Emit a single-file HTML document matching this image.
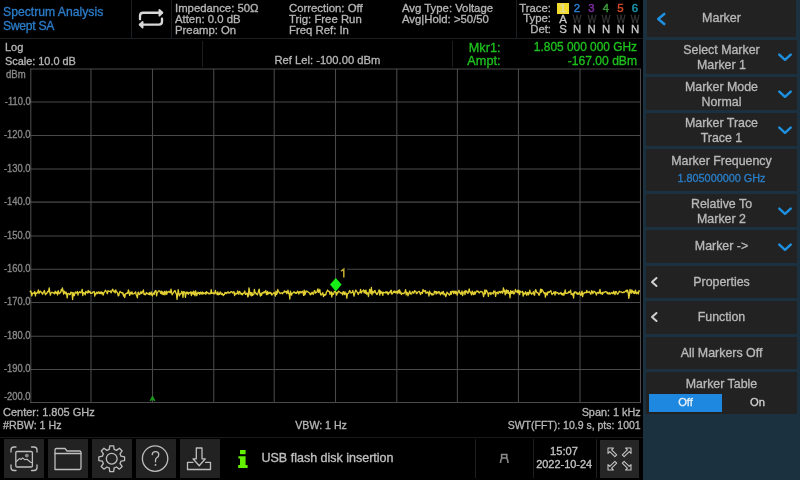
<!DOCTYPE html>
<html><head><meta charset="utf-8"><style>
html,body{margin:0;padding:0;}
body{width:800px;height:480px;background:#000;position:relative;overflow:hidden;filter:blur(0.4px);font-family:"Liberation Sans",sans-serif;}
.t{position:absolute;line-height:1;white-space:nowrap;-webkit-text-stroke:0.32px currentColor;}
.r{position:absolute;}
</style></head><body>
<div class="t" style="left:3px;top:6.17px;font-size:12.2px;color:#2a7cc8;">Spectrum Analysis</div>
<div class="t" style="left:3px;top:20.27px;font-size:12.2px;color:#2a7cc8;letter-spacing:-0.3px;">Swept SA</div>
<div class="r" style="left:0px;top:38px;width:643px;height:1px;background:#1c1f22;"></div>
<div class="r" style="left:131px;top:0px;width:1px;height:38px;background:#1c1f22;"></div>
<div class="r" style="left:171px;top:0px;width:1px;height:38px;background:#1c1f22;"></div>
<div class="r" style="left:516px;top:0px;width:1px;height:38px;background:#1c1f22;"></div>
<svg class="r" style="left:134px;top:4px" width="34" height="30" viewBox="0 0 34 30">
<g fill="none" stroke="#d8d8d8" stroke-width="2.3" stroke-linecap="round" stroke-linejoin="round">
<path d="M6 15.3 V12 Q6 8.75 9.2 8.75 H27.6"/><path d="M25.4 6 L28.4 8.75 L25.4 11.6 Z" fill="#d8d8d8" stroke-width="1.8"/>
<path d="M28 14.6 V17.4 Q28 20.6 24.8 20.6 H6.2"/><path d="M8.6 17.9 L5.6 20.6 L8.6 23.6 Z" fill="#d8d8d8" stroke-width="1.8"/>
</g></svg>
<div class="t" style="left:175px;top:3.14px;font-size:11.35px;color:#b6b6b6;">Impedance: 50Ω</div>
<div class="t" style="left:175px;top:14.14px;font-size:11.35px;color:#b6b6b6;">Atten: 0.0 dB</div>
<div class="t" style="left:175px;top:25.14px;font-size:11.35px;color:#b6b6b6;">Preamp: On</div>
<div class="t" style="left:289px;top:3.14px;font-size:11.35px;color:#b6b6b6;">Correction: Off</div>
<div class="t" style="left:289px;top:14.14px;font-size:11.35px;color:#b6b6b6;">Trig: Free Run</div>
<div class="t" style="left:289px;top:25.14px;font-size:11.35px;color:#b6b6b6;">Freq Ref: In</div>
<div class="t" style="left:402px;top:3.14px;font-size:11.35px;color:#b6b6b6;">Avg Type: Voltage</div>
<div class="t" style="left:402px;top:14.14px;font-size:11.35px;color:#b6b6b6;">Avg|Hold: &gt;50/50</div>
<div class="t" style="right:249px;top:2.69px;font-size:11.35px;color:#b6b6b6;">Trace:</div>
<div class="t" style="right:249px;top:13.49px;font-size:11.35px;color:#b6b6b6;">Type:</div>
<div class="t" style="right:249px;top:24.29px;font-size:11.35px;color:#b6b6b6;">Det:</div>
<div class="r" style="left:557px;top:3px;width:12px;height:11px;background:#f2da2e;"></div>
<div class="t" style="left:553.0px;width:20px;text-align:center;top:2.95px;font-size:11.4px;color:#e4dc9c;-webkit-text-stroke:0.45px #e4dc9c;">1</div>
<div class="t" style="left:567.0px;width:20px;text-align:center;top:2.95px;font-size:11.4px;color:#2a7fd0;-webkit-text-stroke:0.45px #2a7fd0;">2</div>
<div class="t" style="left:581.5px;width:20px;text-align:center;top:2.95px;font-size:11.4px;color:#7e2aa0;-webkit-text-stroke:0.45px #7e2aa0;">3</div>
<div class="t" style="left:596.0px;width:20px;text-align:center;top:2.95px;font-size:11.4px;color:#3c9a3c;-webkit-text-stroke:0.45px #3c9a3c;">4</div>
<div class="t" style="left:610.5px;width:20px;text-align:center;top:2.95px;font-size:11.4px;color:#d24a26;-webkit-text-stroke:0.45px #d24a26;">5</div>
<div class="t" style="left:625.0px;width:20px;text-align:center;top:2.95px;font-size:11.4px;color:#1a98b0;-webkit-text-stroke:0.45px #1a98b0;">6</div>
<div class="t" style="left:553.0px;width:20px;text-align:center;top:13.55px;font-size:11.4px;color:#c8c8c8;">A</div>
<div class="t" style="left:567.0px;width:20px;text-align:center;top:13.55px;font-size:11.4px;color:#383838;transform:scaleX(0.8);">W</div>
<div class="t" style="left:581.5px;width:20px;text-align:center;top:13.55px;font-size:11.4px;color:#383838;transform:scaleX(0.8);">W</div>
<div class="t" style="left:596.0px;width:20px;text-align:center;top:13.55px;font-size:11.4px;color:#383838;transform:scaleX(0.8);">W</div>
<div class="t" style="left:610.5px;width:20px;text-align:center;top:13.55px;font-size:11.4px;color:#383838;transform:scaleX(0.8);">W</div>
<div class="t" style="left:625.0px;width:20px;text-align:center;top:13.55px;font-size:11.4px;color:#383838;transform:scaleX(0.8);">W</div>
<div class="t" style="left:553.0px;width:20px;text-align:center;top:24.35px;font-size:11.4px;color:#c8c8c8;">S</div>
<div class="t" style="left:567.0px;width:20px;text-align:center;top:24.35px;font-size:11.4px;color:#c8c8c8;">N</div>
<div class="t" style="left:581.5px;width:20px;text-align:center;top:24.35px;font-size:11.4px;color:#c8c8c8;">N</div>
<div class="t" style="left:596.0px;width:20px;text-align:center;top:24.35px;font-size:11.4px;color:#c8c8c8;">N</div>
<div class="t" style="left:610.5px;width:20px;text-align:center;top:24.35px;font-size:11.4px;color:#c8c8c8;">N</div>
<div class="t" style="left:625.0px;width:20px;text-align:center;top:24.35px;font-size:11.4px;color:#c8c8c8;">N</div>
<div class="t" style="left:5px;top:42.19px;font-size:11px;color:#b6b6b6;">Log</div>
<div class="t" style="left:5px;top:55.87px;font-size:10.9px;color:#b6b6b6;">Scale: 10.0 dB</div>
<div class="r" style="left:202px;top:41px;width:1px;height:26px;background:#1e1e1e;"></div>
<div class="r" style="left:452px;top:41px;width:1px;height:26px;background:#1e1e1e;"></div>
<div class="t" style="left:274.5px;top:55.02px;font-size:11.2px;color:#b6b6b6;">Ref Lel: -100.00 dBm</div>
<div class="t" style="right:299.5px;top:41.75px;font-size:12.7px;color:#1ec21e;">Mkr1:</div>
<div class="t" style="right:299.5px;top:54.85px;font-size:12.7px;color:#1ec21e;">Ampt:</div>
<div class="t" style="right:163px;top:42.23px;font-size:11.9px;color:#1ec21e;">1.805 000 000 GHz</div>
<div class="t" style="right:163px;top:55.26px;font-size:12.1px;color:#1ec21e;">-167.00 dBm</div>
<svg class="r" style="left:0;top:0" width="643" height="438" viewBox="0 0 643 438">
<path d="M30.80 69 V403 M91.00 69 V403 M152.50 69 V403 M213.75 69 V403 M274.20 69 V403 M335.50 69 V403 M396.80 69 V403 M457.40 69 V403 M518.45 69 V403 M580.00 69 V403 M640.50 69 V403 M30 68.90 H641 M30 101.90 H641 M30 135.50 H641 M30 169.00 H641 M30 202.10 H641 M30 236.00 H641 M30 269.30 H641 M30 302.45 H641 M30 336.20 H641 M30 369.50 H641 M30 402.50 H641" stroke="#4a4a4a" stroke-width="1.05" fill="none"/>
<polyline points="30.0,292.3 30.6,290.9 31.2,292.1 31.8,295.9 32.4,293.5 33.0,292.9 33.6,293.3 34.2,293.3 34.8,291.5 35.4,296.0 36.0,292.8 36.6,293.3 37.2,293.0 37.8,291.9 38.4,289.9 39.0,293.5 39.6,292.1 40.2,291.2 40.8,291.4 41.4,292.8 42.0,292.7 42.6,294.4 43.2,292.7 43.8,291.5 44.4,290.5 45.0,293.5 45.6,294.7 46.2,293.3 46.8,293.5 47.4,291.9 48.0,291.2 48.6,291.7 49.2,287.9 49.8,292.4 50.4,295.1 51.0,292.8 51.6,292.4 52.2,292.3 52.8,292.9 53.4,293.0 54.0,292.7 54.6,293.9 55.2,291.1 55.8,293.0 56.4,293.4 57.0,291.9 57.6,295.0 58.2,290.6 58.8,292.5 59.4,293.6 60.0,292.7 60.6,292.7 61.2,289.6 61.8,290.9 62.4,288.0 63.0,290.7 63.6,294.2 64.2,291.1 64.8,292.5 65.4,293.8 66.0,292.0 66.6,293.6 67.2,297.9 67.8,293.9 68.4,293.3 69.0,293.5 69.6,294.6 70.2,294.6 70.8,292.2 71.4,292.6 72.0,292.4 72.6,299.5 73.2,292.6 73.8,295.6 74.4,295.6 75.0,292.5 75.6,292.0 76.2,293.1 76.8,292.9 77.4,291.4 78.0,295.1 78.6,292.6 79.2,292.5 79.8,291.6 80.4,292.8 81.0,292.7 81.6,291.4 82.2,289.3 82.8,295.6 83.4,292.7 84.0,292.7 84.6,293.5 85.2,294.8 85.8,291.3 86.4,292.6 87.0,292.1 87.6,293.0 88.2,290.4 88.8,292.7 89.4,291.5 90.0,291.4 90.6,293.3 91.2,293.0 91.8,293.3 92.4,292.9 93.0,291.9 93.6,291.8 94.2,291.5 94.8,296.1 95.4,293.3 96.0,294.0 96.6,292.2 97.2,292.8 97.8,293.6 98.4,291.8 99.0,292.0 99.6,293.6 100.2,292.0 100.8,293.7 101.4,291.9 102.0,293.9 102.6,292.4 103.2,295.0 103.8,292.9 104.4,292.3 105.0,290.9 105.6,290.2 106.2,291.5 106.8,292.5 107.4,293.7 108.0,290.6 108.6,291.5 109.2,291.3 109.8,291.4 110.4,290.9 111.0,292.9 111.6,291.8 112.2,289.9 112.8,289.3 113.4,291.1 114.0,291.7 114.6,291.0 115.2,293.0 115.8,289.9 116.4,291.9 117.0,291.9 117.6,293.2 118.2,295.9 118.8,295.5 119.4,292.7 120.0,291.4 120.6,292.3 121.2,292.5 121.8,292.3 122.4,293.8 123.0,292.9 123.6,296.2 124.2,294.5 124.8,297.5 125.4,293.8 126.0,293.6 126.6,293.7 127.2,292.7 127.8,293.4 128.4,289.9 129.0,291.7 129.6,295.4 130.2,294.3 130.8,292.2 131.4,293.9 132.0,291.8 132.6,294.0 133.2,293.9 133.8,293.9 134.4,293.0 135.0,293.0 135.6,291.9 136.2,294.7 136.8,295.9 137.4,297.8 138.0,292.3 138.6,292.2 139.2,294.5 139.8,294.4 140.4,293.5 141.0,291.5 141.6,293.7 142.2,292.6 142.8,291.7 143.4,289.9 144.0,294.3 144.6,293.8 145.2,294.9 145.8,294.2 146.4,292.5 147.0,293.6 147.6,293.5 148.2,293.9 148.8,294.4 149.4,292.5 150.0,294.9 150.6,294.0 151.2,291.8 151.8,295.0 152.4,295.9 153.0,293.7 153.6,292.9 154.2,294.4 154.8,291.6 155.4,290.7 156.0,290.6 156.6,295.9 157.2,292.7 157.8,292.3 158.4,291.0 159.0,290.9 159.6,290.8 160.2,292.2 160.8,293.4 161.4,291.1 162.0,294.2 162.6,291.9 163.2,294.5 163.8,294.4 164.4,291.3 165.0,294.9 165.6,292.9 166.2,291.0 166.8,294.4 167.4,291.9 168.0,292.4 168.6,291.7 169.2,291.2 169.8,292.5 170.4,292.8 171.0,289.1 171.6,292.2 172.2,294.8 172.8,293.3 173.4,292.7 174.0,291.9 174.6,290.6 175.2,290.9 175.8,292.8 176.4,293.8 177.0,299.3 177.6,294.8 178.2,289.6 178.8,293.1 179.4,295.8 180.0,294.0 180.6,294.0 181.2,293.4 181.8,291.2 182.4,292.8 183.0,297.3 183.6,291.6 184.2,292.5 184.8,292.0 185.4,297.3 186.0,293.5 186.6,292.1 187.2,293.4 187.8,292.1 188.4,294.3 189.0,292.8 189.6,292.5 190.2,293.0 190.8,291.9 191.4,295.6 192.0,292.1 192.6,292.4 193.2,294.4 193.8,291.2 194.4,294.0 195.0,295.9 195.6,290.8 196.2,293.0 196.8,295.6 197.4,293.9 198.0,292.1 198.6,293.5 199.2,292.6 199.8,294.6 200.4,292.2 201.0,293.0 201.6,294.0 202.2,291.9 202.8,294.0 203.4,292.7 204.0,293.6 204.6,293.4 205.2,292.6 205.8,294.3 206.4,291.6 207.0,293.2 207.6,292.4 208.2,293.0 208.8,293.8 209.4,293.9 210.0,293.0 210.6,293.7 211.2,289.6 211.8,293.4 212.4,293.1 213.0,292.7 213.6,293.7 214.2,293.0 214.8,293.8 215.4,290.4 216.0,292.9 216.6,293.2 217.2,294.7 217.8,292.0 218.4,294.8 219.0,293.3 219.6,294.4 220.2,291.9 220.8,292.5 221.4,294.5 222.0,294.3 222.6,293.5 223.2,295.6 223.8,294.7 224.4,294.7 225.0,292.3 225.6,292.6 226.2,293.6 226.8,292.6 227.4,292.9 228.0,291.7 228.6,293.0 229.2,292.7 229.8,293.0 230.4,292.3 231.0,291.7 231.6,291.6 232.2,292.5 232.8,293.0 233.4,291.8 234.0,291.6 234.6,295.7 235.2,293.2 235.8,294.0 236.4,293.6 237.0,293.8 237.6,290.9 238.2,292.7 238.8,294.3 239.4,291.3 240.0,292.0 240.6,293.3 241.2,294.6 241.8,293.2 242.4,294.8 243.0,293.6 243.6,293.3 244.2,292.5 244.8,291.0 245.4,294.4 246.0,294.3 246.6,293.2 247.2,293.1 247.8,296.8 248.4,295.8 249.0,287.8 249.6,291.9 250.2,294.8 250.8,292.4 251.4,295.9 252.0,292.7 252.6,295.3 253.2,294.6 253.8,294.3 254.4,289.4 255.0,292.8 255.6,292.6 256.2,294.0 256.8,293.8 257.4,294.9 258.0,293.1 258.6,290.8 259.2,289.2 259.8,294.0 260.4,296.1 261.0,293.5 261.6,295.4 262.2,292.6 262.8,293.1 263.4,293.0 264.0,291.7 264.6,292.8 265.2,291.6 265.8,290.5 266.4,294.3 267.0,294.6 267.6,291.3 268.2,294.0 268.8,292.8 269.4,293.4 270.0,292.1 270.6,293.7 271.2,293.0 271.8,295.1 272.4,294.1 273.0,293.7 273.6,293.0 274.2,292.4 274.8,293.9 275.4,296.1 276.0,291.1 276.6,294.3 277.2,293.4 277.8,289.5 278.4,291.6 279.0,291.9 279.6,292.8 280.2,293.6 280.8,292.8 281.4,292.8 282.0,293.1 282.6,293.7 283.2,292.3 283.8,292.4 284.4,290.8 285.0,291.8 285.6,292.1 286.2,291.2 286.8,293.6 287.4,292.4 288.0,290.2 288.6,293.7 289.2,293.5 289.8,299.0 290.4,291.1 291.0,293.5 291.6,295.2 292.2,293.1 292.8,293.1 293.4,292.3 294.0,291.8 294.6,292.5 295.2,293.2 295.8,292.4 296.4,293.4 297.0,292.5 297.6,291.1 298.2,292.2 298.8,294.1 299.4,291.7 300.0,292.7 300.6,291.7 301.2,292.9 301.8,291.9 302.4,291.2 303.0,292.3 303.6,295.4 304.2,290.1 304.8,294.8 305.4,293.5 306.0,290.9 306.6,291.8 307.2,291.3 307.8,291.8 308.4,292.2 309.0,292.7 309.6,292.8 310.2,294.9 310.8,293.5 311.4,294.1 312.0,292.2 312.6,292.8 313.2,294.5 313.8,293.3 314.4,290.7 315.0,290.8 315.6,293.1 316.2,292.5 316.8,292.3 317.4,290.1 318.0,288.9 318.6,292.4 319.2,291.4 319.8,289.4 320.4,293.8 321.0,295.2 321.6,293.9 322.2,294.0 322.8,292.6 323.4,296.5 324.0,294.7 324.6,295.5 325.2,294.1 325.8,294.8 326.4,292.0 327.0,291.5 327.6,290.0 328.2,291.0 328.8,291.5 329.4,291.5 330.0,294.3 330.6,292.7 331.2,291.8 331.8,296.8 332.4,293.0 333.0,294.5 333.6,294.1 334.2,291.7 334.8,291.4 335.4,291.5 336.0,293.1 336.6,295.2 337.2,292.5 337.8,293.1 338.4,291.1 339.0,291.5 339.6,291.8 340.2,292.6 340.8,293.0 341.4,293.1 342.0,292.9 342.6,294.8 343.2,291.7 343.8,292.0 344.4,294.6 345.0,292.0 345.6,294.1 346.2,293.2 346.8,298.1 347.4,294.0 348.0,293.3 348.6,293.4 349.2,291.1 349.8,290.5 350.4,292.3 351.0,293.0 351.6,292.6 352.2,292.4 352.8,290.4 353.4,292.8 354.0,296.1 354.6,293.6 355.2,291.8 355.8,290.0 356.4,291.0 357.0,292.0 357.6,292.4 358.2,294.5 358.8,293.0 359.4,292.5 360.0,292.5 360.6,289.3 361.2,293.1 361.8,291.9 362.4,291.1 363.0,290.9 363.6,289.9 364.2,292.8 364.8,290.7 365.4,293.2 366.0,290.1 366.6,294.1 367.2,293.4 367.8,292.8 368.4,296.5 369.0,293.3 369.6,289.5 370.2,290.2 370.8,293.4 371.4,287.5 372.0,294.8 372.6,291.2 373.2,292.7 373.8,292.9 374.4,290.9 375.0,290.5 375.6,292.9 376.2,293.0 376.8,294.5 377.4,294.1 378.0,292.5 378.6,291.3 379.2,289.8 379.8,295.2 380.4,290.8 381.0,293.3 381.6,291.8 382.2,292.3 382.8,295.3 383.4,292.2 384.0,292.6 384.6,292.6 385.2,292.8 385.8,291.8 386.4,293.0 387.0,291.7 387.6,293.0 388.2,294.7 388.8,292.5 389.4,292.1 390.0,293.0 390.6,290.8 391.2,290.2 391.8,294.1 392.4,293.7 393.0,292.8 393.6,291.3 394.2,292.4 394.8,291.0 395.4,292.8 396.0,291.9 396.6,291.5 397.2,293.6 397.8,291.1 398.4,290.3 399.0,293.2 399.6,290.0 400.2,293.0 400.8,292.0 401.4,294.5 402.0,293.4 402.6,293.5 403.2,293.3 403.8,293.7 404.4,292.6 405.0,292.0 405.6,289.6 406.2,294.9 406.8,292.1 407.4,292.9 408.0,295.9 408.6,294.2 409.2,292.2 409.8,291.0 410.4,293.6 411.0,294.2 411.6,294.0 412.2,292.0 412.8,291.7 413.4,293.0 414.0,293.0 414.6,290.6 415.2,291.4 415.8,291.3 416.4,293.6 417.0,293.5 417.6,292.0 418.2,291.8 418.8,291.5 419.4,291.5 420.0,293.3 420.6,294.5 421.2,292.4 421.8,292.8 422.4,293.3 423.0,289.5 423.6,290.7 424.2,291.7 424.8,290.9 425.4,290.5 426.0,293.3 426.6,292.4 427.2,292.6 427.8,291.9 428.4,293.5 429.0,296.0 429.6,291.1 430.2,293.4 430.8,293.1 431.4,294.8 432.0,293.3 432.6,295.0 433.2,294.5 433.8,294.5 434.4,291.1 435.0,292.7 435.6,291.5 436.2,294.0 436.8,291.7 437.4,292.7 438.0,293.3 438.6,291.6 439.2,291.7 439.8,293.2 440.4,294.8 441.0,292.9 441.6,292.1 442.2,294.0 442.8,292.1 443.4,291.4 444.0,294.9 444.6,293.8 445.2,294.3 445.8,296.6 446.4,294.9 447.0,292.2 447.6,293.1 448.2,293.4 448.8,294.4 449.4,295.2 450.0,294.3 450.6,291.6 451.2,294.3 451.8,291.3 452.4,291.9 453.0,291.0 453.6,293.7 454.2,291.6 454.8,291.3 455.4,293.7 456.0,291.2 456.6,292.5 457.2,295.2 457.8,293.0 458.4,291.3 459.0,290.2 459.6,292.9 460.2,292.5 460.8,294.4 461.4,293.1 462.0,290.8 462.6,295.7 463.2,293.3 463.8,292.4 464.4,291.2 465.0,294.7 465.6,290.6 466.2,292.0 466.8,291.0 467.4,293.2 468.0,293.3 468.6,291.5 469.2,288.8 469.8,292.0 470.4,292.0 471.0,293.6 471.6,294.9 472.2,291.1 472.8,292.0 473.4,294.7 474.0,294.5 474.6,291.9 475.2,294.1 475.8,291.8 476.4,291.9 477.0,290.8 477.6,291.7 478.2,291.2 478.8,292.6 479.4,293.0 480.0,291.9 480.6,291.4 481.2,291.5 481.8,292.1 482.4,292.0 483.0,293.8 483.6,296.5 484.2,293.6 484.8,290.0 485.4,293.8 486.0,290.1 486.6,290.6 487.2,291.9 487.8,292.9 488.4,296.4 489.0,293.2 489.6,293.2 490.2,292.5 490.8,294.7 491.4,293.1 492.0,292.8 492.6,293.0 493.2,294.0 493.8,291.0 494.4,292.0 495.0,291.1 495.6,296.4 496.2,292.6 496.8,292.8 497.4,292.1 498.0,293.9 498.6,293.1 499.2,291.3 499.8,291.8 500.4,292.9 501.0,291.4 501.6,291.3 502.2,293.1 502.8,293.0 503.4,287.8 504.0,291.3 504.6,290.1 505.2,294.9 505.8,292.5 506.4,290.0 507.0,293.5 507.6,290.4 508.2,290.6 508.8,293.5 509.4,292.7 510.0,297.8 510.6,290.6 511.2,293.5 511.8,291.4 512.4,293.2 513.0,290.8 513.6,293.9 514.2,293.6 514.8,292.7 515.4,289.5 516.0,291.6 516.6,291.2 517.2,292.5 517.8,290.2 518.4,293.1 519.0,290.5 519.6,294.6 520.2,291.2 520.8,291.7 521.4,292.1 522.0,292.2 522.6,291.3 523.2,296.2 523.8,292.9 524.4,294.1 525.0,293.9 525.6,291.7 526.2,293.7 526.8,295.4 527.4,292.7 528.0,292.4 528.6,294.9 529.2,293.1 529.8,290.1 530.4,293.2 531.0,292.9 531.6,294.3 532.2,293.3 532.8,293.0 533.4,291.7 534.0,295.0 534.6,295.2 535.2,290.7 535.8,289.7 536.4,291.6 537.0,292.8 537.6,292.7 538.2,293.0 538.8,295.0 539.4,295.1 540.0,292.4 540.6,289.1 541.2,292.3 541.8,289.4 542.4,290.3 543.0,291.2 543.6,292.4 544.2,293.3 544.8,292.7 545.4,297.1 546.0,293.2 546.6,293.0 547.2,295.1 547.8,291.8 548.4,291.9 549.0,292.7 549.6,291.6 550.2,291.4 550.8,290.6 551.4,292.7 552.0,294.6 552.6,293.6 553.2,293.4 553.8,291.9 554.4,292.2 555.0,295.1 555.6,291.7 556.2,292.5 556.8,293.1 557.4,292.6 558.0,293.0 558.6,294.1 559.2,293.2 559.8,293.9 560.4,293.3 561.0,292.4 561.6,294.6 562.2,293.6 562.8,295.1 563.4,293.1 564.0,295.2 564.6,292.9 565.2,289.9 565.8,293.5 566.4,293.3 567.0,293.3 567.6,292.9 568.2,293.1 568.8,291.6 569.4,292.5 570.0,292.0 570.6,290.1 571.2,294.3 571.8,293.7 572.4,295.0 573.0,293.7 573.6,298.0 574.2,292.0 574.8,293.2 575.4,291.9 576.0,292.0 576.6,293.1 577.2,294.3 577.8,292.8 578.4,294.2 579.0,294.2 579.6,291.8 580.2,294.4 580.8,295.4 581.4,293.9 582.0,291.1 582.6,296.7 583.2,293.2 583.8,293.5 584.4,292.8 585.0,292.3 585.6,292.7 586.2,292.8 586.8,290.5 587.4,292.1 588.0,292.5 588.6,292.2 589.2,291.5 589.8,292.5 590.4,293.8 591.0,294.1 591.6,290.7 592.2,291.4 592.8,293.7 593.4,292.2 594.0,291.2 594.6,292.2 595.2,292.0 595.8,293.4 596.4,295.1 597.0,292.6 597.6,292.8 598.2,292.3 598.8,293.5 599.4,292.3 600.0,289.3 600.6,293.5 601.2,293.5 601.8,292.8 602.4,294.4 603.0,292.1 603.6,292.8 604.2,292.4 604.8,292.1 605.4,291.6 606.0,291.8 606.6,291.8 607.2,293.6 607.8,292.4 608.4,293.9 609.0,294.0 609.6,292.6 610.2,294.1 610.8,293.3 611.4,293.2 612.0,292.4 612.6,293.6 613.2,293.7 613.8,291.1 614.4,293.1 615.0,294.7 615.6,291.7 616.2,291.5 616.8,292.8 617.4,294.2 618.0,294.0 618.6,292.8 619.2,291.1 619.8,291.9 620.4,291.9 621.0,291.8 621.6,292.1 622.2,292.7 622.8,292.6 623.4,291.9 624.0,292.5 624.6,291.8 625.2,291.7 625.8,290.8 626.4,290.2 627.0,292.1 627.6,290.2 628.2,292.7 628.8,298.4 629.4,295.2 630.0,289.4 630.6,292.3 631.2,293.2 631.8,290.0 632.4,290.9 633.0,292.9 633.6,291.3 634.2,293.5 634.8,293.3 635.4,290.1 636.0,292.8 636.6,293.7 637.2,292.2 637.8,292.3 638.4,294.0 639.0,290.6 639.6,291.6" fill="none" stroke="#e2d034" stroke-width="1.3" stroke-linejoin="round"/>
<rect x="339" y="265" width="8" height="13" fill="#000"/>
<path d="M335.8 278 L341.6 284.6 L335.8 291.4 L330 284.6 Z" fill="#16f016"/>
<path d="M152.5 396 L155 400.8 L152.5 399.6 L150 400.8 Z" fill="#1c9c1c" stroke="#1c9c1c" stroke-width="0.8"/>
</svg>
<svg class="r" style="left:338px;top:266px" width="10" height="14" viewBox="338 266 10 14"><path d="M341 271.2 L343.8 269.2 V277.6" fill="none" stroke="#c8b030" stroke-width="1.5"/></svg>
<div class="t" style="left:6px;top:70.40px;font-size:10.4px;color:#8a8a8a;transform:scaleX(0.92);transform-origin:0 50%;">dBm</div>
<div class="t" style="right:769.5px;top:96.70px;font-size:10.4px;color:#8a8a8a;transform:scaleX(0.9);transform-origin:100% 50%;">-110.0</div>
<div class="t" style="right:769.5px;top:130.30px;font-size:10.4px;color:#8a8a8a;transform:scaleX(0.9);transform-origin:100% 50%;">-120.0</div>
<div class="t" style="right:769.5px;top:163.80px;font-size:10.4px;color:#8a8a8a;transform:scaleX(0.9);transform-origin:100% 50%;">-130.0</div>
<div class="t" style="right:769.5px;top:196.90px;font-size:10.4px;color:#8a8a8a;transform:scaleX(0.9);transform-origin:100% 50%;">-140.0</div>
<div class="t" style="right:769.5px;top:230.80px;font-size:10.4px;color:#8a8a8a;transform:scaleX(0.9);transform-origin:100% 50%;">-150.0</div>
<div class="t" style="right:769.5px;top:264.10px;font-size:10.4px;color:#8a8a8a;transform:scaleX(0.9);transform-origin:100% 50%;">-160.0</div>
<div class="t" style="right:769.5px;top:297.25px;font-size:10.4px;color:#8a8a8a;transform:scaleX(0.9);transform-origin:100% 50%;">-170.0</div>
<div class="t" style="right:769.5px;top:331.00px;font-size:10.4px;color:#8a8a8a;transform:scaleX(0.9);transform-origin:100% 50%;">-180.0</div>
<div class="t" style="right:769.5px;top:364.30px;font-size:10.4px;color:#8a8a8a;transform:scaleX(0.9);transform-origin:100% 50%;">-190.0</div>
<div class="t" style="right:769.5px;top:391.80px;font-size:10.4px;color:#8a8a8a;transform:scaleX(0.9);transform-origin:100% 50%;">-200.0</div>
<div class="t" style="left:3px;top:406.69px;font-size:11px;color:#b6b6b6;">Center: 1.805 GHz</div>
<div class="t" style="left:3px;top:419.74px;font-size:10.7px;color:#b6b6b6;">#RBW: 1 Hz</div>
<div class="t" style="left:295.3px;top:419.83px;font-size:10.6px;color:#b6b6b6;">VBW: 1 Hz</div>
<div class="t" style="right:159.29999999999995px;top:406.82px;font-size:10.85px;color:#b6b6b6;">Span: 1 kHz</div>
<div class="t" style="right:159.29999999999995px;top:419.71px;font-size:10.5px;color:#b6b6b6;">SWT(FFT): 10.9 s, pts: 1001</div>
<div class="r" style="left:0px;top:437px;width:643px;height:1px;background:#1a1a1a;"></div>
<div class="r" style="left:4px;top:439px;width:40px;height:39px;background:#222222;"></div>
<div class="r" style="left:48px;top:439px;width:40px;height:39px;background:#222222;"></div>
<div class="r" style="left:92px;top:439px;width:40px;height:39px;background:#222222;"></div>
<div class="r" style="left:136px;top:439px;width:40px;height:39px;background:#222222;"></div>
<div class="r" style="left:180px;top:439px;width:40px;height:39px;background:#222222;"></div>
<svg class="r" style="left:0;top:438px" width="230" height="42" viewBox="0 438 230 42">
<g fill="none" stroke="#bebebe" stroke-width="1.3" stroke-linecap="round" stroke-linejoin="round">
<path d="M11 452 V450 Q11 447 14 447 H16"/><path d="M31.5 447 H34 Q37 447 37 450 V452"/>
<path d="M11 465 V467.5 Q11 470.5 14 470.5 H16"/><path d="M31.5 470.5 H34 Q37 470.5 37 467.5 V465"/>
<rect x="15.8" y="451.5" width="16.6" height="15.5" rx="1.2"/>
<path d="M16.3 461.5 L19.5 458.6 L21.2 459.4 L22.6 457.8 L24.6 459.6 L27 459.3 L30.6 462.2 L32.4 462.8" stroke-width="1.1"/>
<path d="M55 469.5 H79.5 Q81 469.5 81 468 V452.5 Q81 451 79.5 451 H67 L65 448.5 H56.5 Q55 448.5 55 450 Z"/>
<path d="M55 453.5 H81"/>
<path d="M109.22 449.43 L109.78 445.84 L113.62 445.84 L114.18 449.43 A9.6 9.6 0 0 1 116.50 450.39 L119.43 448.25 L122.15 450.97 L120.01 453.90 A9.6 9.6 0 0 1 120.97 456.22 L124.56 456.78 L124.56 460.62 L120.97 461.18 A9.6 9.6 0 0 1 120.01 463.50 L122.15 466.43 L119.43 469.15 L116.50 467.01 A9.6 9.6 0 0 1 114.18 467.97 L113.62 471.56 L109.78 471.56 L109.22 467.97 A9.6 9.6 0 0 1 106.90 467.01 L103.97 469.15 L101.25 466.43 L103.39 463.50 A9.6 9.6 0 0 1 102.43 461.18 L98.84 460.62 L98.84 456.78 L102.43 456.22 A9.6 9.6 0 0 1 103.39 453.90 L101.25 450.97 L103.97 448.25 L106.90 450.39 A9.6 9.6 0 0 1 109.22 449.43 Z"/>
<circle cx="111.7" cy="458.7" r="5.4"/>
<circle cx="155.1" cy="458.6" r="12.7"/>
<path d="M152.2 454.6 Q152.4 451.6 155.6 451.6 Q158.8 451.6 158.8 454.6 Q158.8 456.6 156.8 457.8 Q155.5 458.6 155.5 460.5 V461.8"/>
<path d="M196.3 448 H202 V458.8 H205.3 L199.2 465.8 L193 458.8 H196.3 Z"/>
<path d="M193 462.3 H187.5 V469.5 H210.5 V462.3 H205.5"/>
</g>
<circle cx="155.5" cy="464.9" r="0.95" fill="#bebebe"/>
<circle cx="26.8" cy="455.6" r="1.9" fill="#8a8a8a"/>
</svg>
<div class="t" style="left:243px;top:452.02px;font-size:12.5px;color:#c0c0c0;left:261.5px;">USB flash disk insertion</div>
<svg class="r" style="left:236px;top:448px" width="14" height="22" viewBox="236 448 14 22">
<g fill="#62f000"><rect x="240" y="450" width="5.6" height="4.2"/>
<path d="M238.4 456.2 H245.6 V465 H247.6 V468 H238.2 V465 H240 V458.6 H238.4 Z"/></g></svg>
<div class="r" style="left:475px;top:439px;width:1px;height:39px;background:#1e1e1e;"></div>
<div class="r" style="left:533px;top:439px;width:1px;height:39px;background:#1e1e1e;"></div>
<div class="r" style="left:596px;top:439px;width:1px;height:39px;background:#1e1e1e;"></div>
<svg class="r" style="left:496px;top:450px" width="16" height="16" viewBox="496 450 16 16">
<g fill="none" stroke="#8c8c8c" stroke-width="1.5"><path d="M501.6 454.5 H506.8 V458 H501.6 Z"/>
<path d="M502 458 Q500.5 459.5 500.5 463" /><path d="M506.4 458 Q508 459.5 508 463"/></g></svg>
<div class="t" style="left:534.0px;width:60px;text-align:center;top:446.00px;font-size:11.1px;color:#c4c4c4;">15:07</div>
<div class="t" style="left:524.2px;width:80px;text-align:center;top:458.63px;font-size:10.95px;color:#c4c4c4;">2022-10-24</div>
<div class="r" style="left:600px;top:440px;width:39px;height:38px;background:#262626;"></div>
<svg class="r" style="left:600px;top:440px" width="39" height="38" viewBox="600 440 39 38"><g fill="none" stroke="#c4c4c4" stroke-width="1.1" stroke-linejoin="round"><path d="M608.00 448.00 L613.40 448.00 L611.62 449.78 L616.72 454.88 L614.88 456.72 L609.78 451.62 L608.00 453.40 Z"/><path d="M631.00 448.00 L625.60 448.00 L627.38 449.78 L622.28 454.88 L624.12 456.72 L629.22 451.62 L631.00 453.40 Z"/><path d="M608.00 470.00 L613.40 470.00 L611.62 468.22 L616.72 463.12 L614.88 461.28 L609.78 466.38 L608.00 464.60 Z"/><path d="M631.00 470.00 L625.60 470.00 L627.38 468.22 L622.28 463.12 L624.12 461.28 L629.22 466.38 L631.00 464.60 Z"/></g></svg>
<div class="r" style="left:643px;top:0px;width:157px;height:480px;background:#1c3140;"></div>
<div class="r" style="left:647px;top:0px;width:149px;height:37px;background:#222222;"></div>
<div class="r" style="left:646px;top:40px;width:151px;height:34px;background:#222222;"></div>
<div class="r" style="left:646px;top:77px;width:151px;height:33px;background:#222222;"></div>
<div class="r" style="left:646px;top:113px;width:151px;height:33px;background:#222222;"></div>
<div class="r" style="left:646px;top:149px;width:151px;height:42px;background:#222222;"></div>
<div class="r" style="left:646px;top:194px;width:151px;height:33px;background:#222222;"></div>
<div class="r" style="left:646px;top:230px;width:151px;height:33px;background:#222222;"></div>
<div class="r" style="left:646px;top:266px;width:151px;height:32px;background:#222222;"></div>
<div class="r" style="left:646px;top:301px;width:151px;height:33px;background:#222222;"></div>
<div class="r" style="left:646px;top:337px;width:151px;height:32px;background:#222222;"></div>
<div class="r" style="left:646px;top:372px;width:151px;height:42px;background:#222222;"></div>
<div class="t" style="left:651.5px;width:140px;text-align:center;top:12.12px;font-size:12.5px;color:#b9b9b9;">Marker</div>
<svg class="r" style="left:653px;top:11.2px" width="16" height="16" viewBox="0 0 16 16"><path d="M11.25 3.0 L5.25 8 L11.25 13.0" fill="none" stroke="#1e90e0" stroke-width="2.6" stroke-linecap="round" stroke-linejoin="round"/></svg>
<div class="t" style="left:646.5px;width:150px;text-align:center;top:43.90px;font-size:12.4px;color:#b9b9b9;">Select Marker</div>
<div class="t" style="left:646.5px;width:150px;text-align:center;top:58.60px;font-size:12.4px;color:#b9b9b9;">Marker 1</div>
<svg class="r" style="left:776px;top:51.3px" width="18" height="12" viewBox="0 0 18 12"><path d="M3.3 3.6 L9 8.8 L14.7 3.6" fill="none" stroke="#1e90e0" stroke-width="2.5" stroke-linecap="round" stroke-linejoin="round"/></svg>
<div class="t" style="left:646.5px;width:150px;text-align:center;top:80.90px;font-size:12.4px;color:#b9b9b9;">Marker Mode</div>
<div class="t" style="left:646.5px;width:150px;text-align:center;top:95.60px;font-size:12.4px;color:#b9b9b9;">Normal</div>
<svg class="r" style="left:776px;top:88.3px" width="18" height="12" viewBox="0 0 18 12"><path d="M3.3 3.6 L9 8.8 L14.7 3.6" fill="none" stroke="#1e90e0" stroke-width="2.5" stroke-linecap="round" stroke-linejoin="round"/></svg>
<div class="t" style="left:646.5px;width:150px;text-align:center;top:116.90px;font-size:12.4px;color:#b9b9b9;">Marker Trace</div>
<div class="t" style="left:646.5px;width:150px;text-align:center;top:131.60px;font-size:12.4px;color:#b9b9b9;">Trace 1</div>
<svg class="r" style="left:776px;top:124.30000000000001px" width="18" height="12" viewBox="0 0 18 12"><path d="M3.3 3.6 L9 8.8 L14.7 3.6" fill="none" stroke="#1e90e0" stroke-width="2.5" stroke-linecap="round" stroke-linejoin="round"/></svg>
<div class="t" style="left:646.5px;width:150px;text-align:center;top:154.70px;font-size:12.4px;color:#b9b9b9;">Marker Frequency</div>
<div class="t" style="left:646.5px;width:150px;text-align:center;top:173.02px;font-size:10.85px;color:#2a7ec8;">1.805000000 GHz</div>
<div class="t" style="left:646.5px;width:150px;text-align:center;top:197.90px;font-size:12.4px;color:#b9b9b9;">Relative To</div>
<div class="t" style="left:646.5px;width:150px;text-align:center;top:212.60px;font-size:12.4px;color:#b9b9b9;">Marker 2</div>
<svg class="r" style="left:776px;top:205.3px" width="18" height="12" viewBox="0 0 18 12"><path d="M3.3 3.6 L9 8.8 L14.7 3.6" fill="none" stroke="#1e90e0" stroke-width="2.5" stroke-linecap="round" stroke-linejoin="round"/></svg>
<div class="t" style="left:646.5px;width:150px;text-align:center;top:240.00px;font-size:12.4px;color:#b9b9b9;">Marker -&gt;</div>
<svg class="r" style="left:776px;top:240.5px" width="18" height="12" viewBox="0 0 18 12"><path d="M3.3 3.6 L9 8.8 L14.7 3.6" fill="none" stroke="#1e90e0" stroke-width="2.5" stroke-linecap="round" stroke-linejoin="round"/></svg>
<div class="t" style="left:646.5px;width:150px;text-align:center;top:275.50px;font-size:12.4px;color:#b9b9b9;">Properties</div>
<svg class="r" style="left:645.5px;top:274px" width="16" height="16" viewBox="0 0 16 16"><path d="M10.5 4.0 L6.0 8 L10.5 12.0" fill="none" stroke="#d0d0d0" stroke-width="2.0" stroke-linecap="round" stroke-linejoin="round"/></svg>
<div class="t" style="left:646.5px;width:150px;text-align:center;top:311.00px;font-size:12.4px;color:#b9b9b9;">Function</div>
<svg class="r" style="left:645.5px;top:309px" width="16" height="16" viewBox="0 0 16 16"><path d="M10.5 4.0 L6.0 8 L10.5 12.0" fill="none" stroke="#d0d0d0" stroke-width="2.0" stroke-linecap="round" stroke-linejoin="round"/></svg>
<div class="t" style="left:646.5px;width:150px;text-align:center;top:346.50px;font-size:12.4px;color:#b9b9b9;">All Markers Off</div>
<div class="t" style="left:646.5px;width:150px;text-align:center;top:378.30px;font-size:12.4px;color:#b9b9b9;">Marker Table</div>
<div class="r" style="left:649px;top:393.5px;width:73px;height:18.5px;background:#1e88e0;"></div>
<div class="t" style="left:655.5px;width:60px;text-align:center;top:396.52px;font-size:11.2px;color:#e8f0f8;">Off</div>
<div class="t" style="left:727.5px;width:60px;text-align:center;top:396.52px;font-size:11.2px;color:#d0d0d0;">On</div>
</body></html>
